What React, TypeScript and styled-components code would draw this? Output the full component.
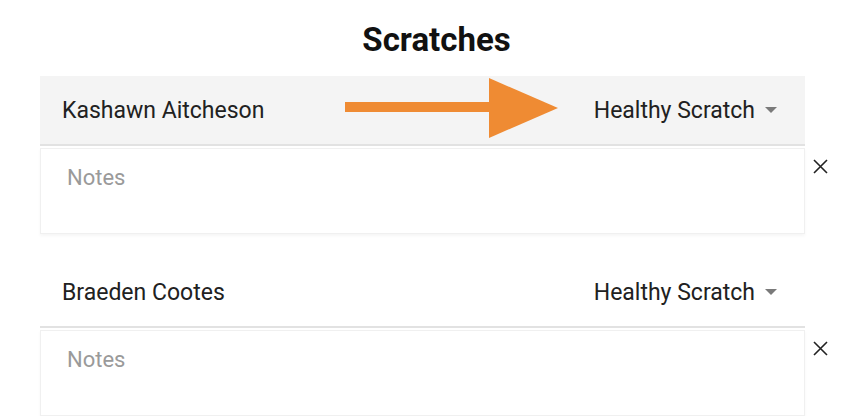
import styled, { createGlobalStyle } from "styled-components";

const scratches = [
  { id: 1, name: "Kashawn Aitcheson", status: "Healthy Scratch", active: true },
  { id: 2, name: "Braeden Cootes", status: "Healthy Scratch", active: false },
];

function App() {
  return (
    <>
      <GlobalStyle />
      <Page>
        <Title>Scratches</Title>
        <List>
          {scratches.map((s) => (
            <Item key={s.id}>
              <Header $active={s.active}>
                <Name>{s.name}</Name>
                <StatusSelect>
                  {s.status}
                  <Caret />
                </StatusSelect>
                {s.active && (
                  <Arrow viewBox="0 0 225 70" width="225" height="70">
                    <rect x="5" y="26" width="146" height="10" fill="#ef8b33" />
                    <polygon points="149,2 218,32 149,62" fill="#ef8b33" />
                  </Arrow>
                )}
              </Header>
              <Notes placeholder="Notes" />
              <RemoveBtn aria-label="Remove">
                <svg width="15" height="15" viewBox="0 0 15 15">
                  <path d="M1 1 L14 14 M14 1 L1 14" stroke="#222" strokeWidth="1.6" fill="none" />
                </svg>
              </RemoveBtn>
            </Item>
          ))}
        </List>
      </Page>
    </>
  );
}

export default App;

const GlobalStyle = createGlobalStyle`
  body {
    margin: 0;
    background: #fff;
    font-family: Roboto, "Liberation Sans", sans-serif;
    overflow: hidden;
  }
`;

const Page = styled.div`
  width: 793px;
  margin-left: 40px;
  padding-top: 20px;
`;

const Title = styled.h1`
  margin: 0 0 17px;
  font-size: 33px;
  line-height: 39px;
  font-weight: 700;
  text-align: center;
  color: #111;
`;

const List = styled.div`
  display: flex;
  flex-direction: column;
  gap: 24px;
`;

const Item = styled.div`
  display: grid;
  grid-template-columns: 765px 28px;
  grid-template-rows: 70px 86px;
  row-gap: 2px;
`;

const Header = styled.div<{ $active: boolean }>`
  position: relative;
  box-sizing: border-box;
  display: flex;
  align-items: center;
  justify-content: space-between;
  padding: 0 28px 0 22px;
  background: ${({ $active }) => ($active ? "#f4f4f4" : "#fff")};
  border-bottom: 2px solid #e2e2e2;
`;

const Name = styled.span`
  font-size: 23px;
  color: #212121;
`;

const StatusSelect = styled.span`
  display: flex;
  align-items: center;
  gap: 10px;
  font-size: 23px;
  color: #212121;
`;

const Caret = styled.span`
  width: 0;
  height: 0;
  border-left: 6px solid transparent;
  border-right: 6px solid transparent;
  border-top: 6px solid #7a7a7a;
`;

const Arrow = styled.svg`
  position: absolute;
  left: 300px;
  top: 0;
`;

const Notes = styled.textarea`
  grid-column: 1;
  box-sizing: border-box;
  resize: none;
  border: 1px solid #f0f0f0;
  box-shadow: 0 2px 3px rgba(0, 0, 0, 0.04);
  padding: 16px 26px;
  font-family: Roboto, "Liberation Sans", sans-serif;
  font-size: 22px;
  color: #212121;
  outline: none;

  &::placeholder {
    color: #9a9a9a;
  }
`;

const RemoveBtn = styled.button`
  grid-column: 2;
  align-self: start;
  justify-self: end;
  margin-top: 11px;
  margin-right: 5px;
  padding: 0;
  border: none;
  background: none;
  line-height: 0;
  cursor: pointer;
`;
